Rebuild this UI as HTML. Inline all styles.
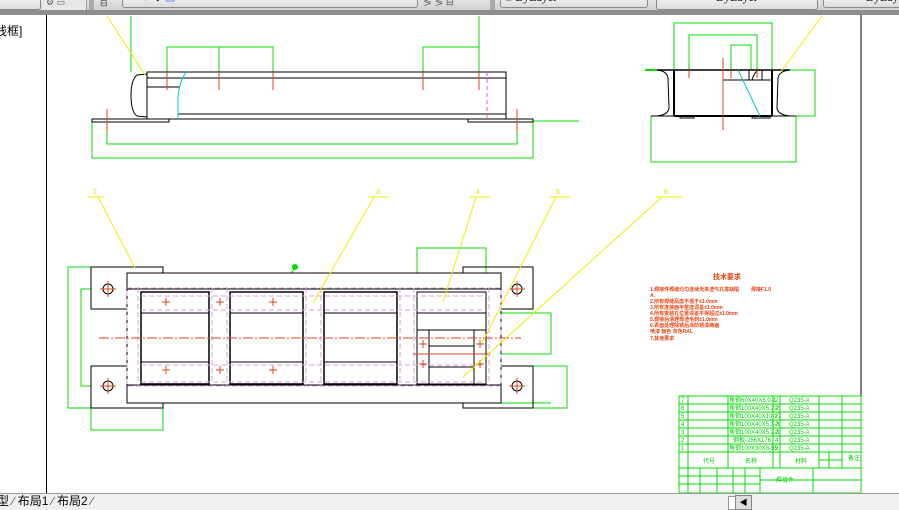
<!DOCTYPE html>
<html><head><meta charset="utf-8"><style>
html,body{margin:0;padding:0;width:899px;height:509px;overflow:hidden;background:#fff;font-family:"Liberation Sans","Noto Sans CJK SC",sans-serif}
#tb{position:absolute;left:0;top:0;width:899px;height:10px;background:linear-gradient(#e4e4e4,#cfcfcf)}
#tb2{position:absolute;left:0;top:10px;width:899px;height:5px;background:#8e8e8e}
.dd{position:absolute;top:-4px;height:12px;background:linear-gradient(#f4f4f4,#dcdcdc);border:1px solid #8a8a8a;border-radius:3px;font:12px "Liberation Serif",serif;color:#000;line-height:1px;overflow:hidden;white-space:nowrap}
#left{position:absolute;left:0;top:15px;width:46px;height:478px;background:#fff;border-right:1px solid #000}
#tabs{position:absolute;left:0;top:493px;width:899px;height:16px;background:#f0f0f0;border-top:1px solid #9a9a9a;font-size:12px;line-height:15px}
</style></head><body>
<div id="tb"></div><div id="tb2"></div>
<div class="dd" style="left:-6px;width:45px"></div>
<div style="position:absolute;left:42px;top:0;width:44px;height:10px;background:#e8e8e8;border-right:1px solid #999"></div>
<div style="position:absolute;left:46px;top:-2px;font-size:9px;line-height:9px;color:#555">⚙ ▭</div>
<div style="position:absolute;left:89px;top:0;width:5px;height:10px;background:#aaa"></div>
<div style="position:absolute;left:100px;top:-1px;font-size:9px;line-height:9px;color:#444">⊟</div>
<div class="dd" style="left:122px;width:296px;font:11px 'Liberation Sans',sans-serif;line-height:1px;padding-left:6px;box-sizing:border-box">♀ ☼ ◆ <span style="color:#26f">▣</span> ■ 0<span style="float:right;margin-right:6px">▾</span></div>
<div style="position:absolute;left:423px;top:-2px;font-size:9px;line-height:9px;color:#444">≶ ≶ ⊟</div>
<div style="position:absolute;left:490px;top:0;width:5px;height:10px;background:#aaa"></div>
<div class="dd" style="left:500px;width:148px;padding-left:4px;box-sizing:border-box">■ ByLayer</div>
<div class="dd" style="left:656px;width:160px;text-align:center">ByLayer</div>
<div class="dd" style="left:823px;width:90px;padding-left:42px;box-sizing:border-box">ByLayer</div>
<div id="left"><div style="position:absolute;left:-5px;top:7px;font-size:12px">线框]</div></div>
<svg style="position:absolute;left:0;top:0" width="899" height="509" viewBox="0 0 899 509">
<line x1="861" y1="15" x2="861" y2="493" stroke="#000"/>
<g fill="none" stroke-width="1">
<!-- top view -->
<g stroke="#0d0">
<polyline points="131,16 131,72"/><polyline points="479,16 479,72"/>
<polyline points="167,72 167,47 273,47 273,72"/><line x1="219" y1="47" x2="219" y2="72"/>
<polyline points="423,72 423,47 479,47"/>
<polyline points="107,120 107,144 517,144 517,120"/>
<polyline points="92,120 92,158 533,158 533,120"/>
<line x1="533" y1="121" x2="579" y2="121"/>
</g>
<g stroke="#000">
<rect x="147" y="72" width="359" height="47"/>
<line x1="147" y1="78" x2="506" y2="78"/><line x1="178" y1="114" x2="506" y2="114"/>
<line x1="147" y1="87" x2="180" y2="87"/>
<path d="M147,74 L137,75 Q131,80 131,95 Q131,112 137,116 L147,117"/>
<rect x="92" y="119" width="77" height="3"/><rect x="468" y="119" width="65" height="3"/>
</g>
<path d="M186,72 Q178,85 178,100 L178,119" stroke="#0cc"/>
<line x1="487" y1="72" x2="487" y2="119" stroke="#c6c" stroke-dasharray="4,3"/>
<g stroke="#d42">
<line x1="167" y1="72" x2="167" y2="90"/><line x1="219" y1="72" x2="219" y2="90"/><line x1="273" y1="72" x2="273" y2="90"/><line x1="423" y1="72" x2="423" y2="90"/><line x1="479" y1="72" x2="479" y2="90"/>
<line x1="107" y1="109" x2="107" y2="132"/><line x1="517" y1="109" x2="517" y2="132"/>
</g>
<line x1="107" y1="16" x2="145" y2="75" stroke="#ee0"/>
<!-- side view -->
<g stroke="#0d0">
<polyline points="674,70 674,23 772,23 772,70"/>
<polyline points="689,70 689,35 757,35 757,70"/>
<polyline points="731,70 731,45 751,45 751,70"/>
<polyline points="651,116 651,162 796,162 796,116"/>
<polyline points="790,70 815,70 815,116 790,116"/>
<line x1="645" y1="70" x2="657" y2="70" stroke-width="2"/>
</g>
<g stroke="#000">
<line x1="657" y1="70" x2="790" y2="70" stroke-width="1.5"/>
<line x1="674" y1="116" x2="772" y2="116" stroke-width="2"/>
<line x1="674" y1="70" x2="674" y2="116" stroke-width="2"/>
<line x1="772" y1="70" x2="772" y2="116" stroke-width="2"/>
<path d="M657,70 Q667,71 668,78 L669,108 Q668,115 657,116 M790,70 Q779,71 778,78 L777,108 Q778,115 790,116"/>
<line x1="723" y1="80" x2="772" y2="80"/>
<line x1="651" y1="116" x2="796" y2="116"/>
<rect x="680" y="116" width="14" height="2"/><rect x="752" y="116" width="18" height="2"/>
<path d="M749,70 L749,80 M762,70 L762,80 M752,80 Q755,70 760,70"/>
</g>
<line x1="723" y1="58" x2="723" y2="130" stroke="#d42"/>
<line x1="689" y1="70" x2="689" y2="78" stroke="#d42"/><line x1="731" y1="70" x2="731" y2="78" stroke="#d42"/><line x1="757" y1="70" x2="757" y2="78" stroke="#d42"/>
<line x1="738" y1="70" x2="760" y2="116" stroke="#0cc"/>
<line x1="822" y1="16" x2="780" y2="73" stroke="#ee0"/>
<!-- plan view -->
<g stroke="#0d0">
<polyline points="91,267 68,267 68,408 91,408"/>
<polyline points="91,289 81,289 81,386 91,386"/>
<polyline points="91,408 91,430 163,430 163,408"/>
<polyline points="417,289 417,248 486,248 486,289"/>
<polyline points="501,313 551,313 551,354 501,354"/>
<polyline points="533,366 567,366 567,408 533,408"/>
<line x1="501" y1="403" x2="551" y2="403"/>
<line x1="295" y1="267" x2="273" y2="303"/>
</g>
<g stroke="#000">
<rect x="91" y="267" width="72" height="42"/><rect x="91" y="366" width="72" height="42"/>
<rect x="463" y="267" width="70" height="42"/><rect x="463" y="366" width="70" height="42"/>
<rect x="127" y="273" width="374" height="130" fill="#fff"/>
<line x1="127" y1="289" x2="501" y2="289"/><line x1="127" y1="385" x2="501" y2="385"/>
<rect x="141" y="292" width="68" height="92" stroke-width="1.5"/>
<rect x="230" y="292" width="73" height="92" stroke-width="1.5"/>
<rect x="324" y="292" width="73" height="92" stroke-width="1.5"/>
<rect x="417" y="292" width="69" height="92"/>
<line x1="141" y1="313" x2="209" y2="313"/><line x1="141" y1="362" x2="209" y2="362"/>
<line x1="230" y1="313" x2="303" y2="313"/><line x1="230" y1="362" x2="303" y2="362"/>
<line x1="324" y1="313" x2="397" y2="313"/><line x1="324" y1="362" x2="397" y2="362"/>
<line x1="417" y1="313" x2="486" y2="313"/>
<rect x="417" y="330" width="69" height="54"/>
<rect x="429" y="330" width="45" height="54"/>
<line x1="429" y1="346" x2="474" y2="346"/><line x1="429" y1="367" x2="474" y2="367"/>
<circle cx="108" cy="289" r="5"/><circle cx="108" cy="386" r="5"/><circle cx="517" cy="289" r="5"/><circle cx="517" cy="386" r="5"/>
</g>
<g stroke="#d8a0d8" stroke-dasharray="5,3">
<rect x="127" y="288" width="374" height="98"/>
<line x1="141" y1="296" x2="486" y2="296"/><line x1="141" y1="382" x2="486" y2="382"/>
<line x1="141" y1="310" x2="486" y2="310"/><line x1="141" y1="365" x2="486" y2="365"/>
<line x1="138" y1="288" x2="138" y2="386"/><line x1="212" y1="288" x2="212" y2="386"/>
<line x1="227" y1="288" x2="227" y2="386"/><line x1="306" y1="288" x2="306" y2="386"/>
<line x1="321" y1="288" x2="321" y2="386"/><line x1="400" y1="288" x2="400" y2="386"/>
<line x1="414" y1="288" x2="414" y2="386"/><line x1="489" y1="288" x2="489" y2="386"/>
</g>
<line x1="99" y1="338" x2="521" y2="338" stroke="#d42" stroke-dasharray="10,2,2,2"/>
<line x1="413" y1="354" x2="490" y2="354" stroke="#d42"/>
<g stroke="#d42">
<path d="M108,281v16M100,289h16M108,378v16M100,386h16M517,281v16M509,289h16M517,378v16M509,386h16"/>
<path d="M166,298v8M162,302h8M220,298v8M216,302h8M273,298v8M269,302h8M166,366v8M162,370h8M220,366v8M216,370h8M273,366v8M269,370h8M423,340v8M419,344h8M480,340v8M476,344h8M423,360v8M419,364h8M480,360v8M476,364h8"/>
</g>
<g stroke="#ee0">
<line x1="88" y1="197" x2="104" y2="197"/><line x1="98" y1="197" x2="135" y2="268"/>
<line x1="368" y1="197" x2="388" y2="197"/><line x1="374" y1="197" x2="313" y2="303"/>
<line x1="470" y1="197" x2="490" y2="197"/><line x1="476" y1="197" x2="443" y2="302"/>
<line x1="550" y1="197" x2="570" y2="197"/><line x1="556" y1="197" x2="482" y2="343"/>
<line x1="656" y1="197" x2="682" y2="197"/><line x1="662" y1="197" x2="463" y2="377"/>
</g>
</g>
<g fill="#dd0" font-size="7" font-family="Liberation Sans">
<text x="93" y="194">2</text><text x="376" y="194">3</text><text x="476" y="194">4</text><text x="556" y="194">5</text><text x="664" y="194">6</text>
</g>
<circle cx="295" cy="267" r="3" fill="#0d0"/>
<!-- tech requirements -->
<g fill="#e84010" font-size="5" font-weight="bold">
<text x="713" y="279" font-size="7">技术要求</text>
<text x="650" y="291">1.焊接件焊缝均匀连续无夹渣气孔等缺陷</text><text x="751" y="291">焊接F1.0</text>
<text x="650" y="297">A.</text>
<text x="650" y="303">2.所有焊缝高度不低于±1.0mm</text>
<text x="650" y="309">3.所有连接面平整度误差±1.0mm</text>
<text x="650" y="315">4.所有安装孔位置误差不得超过±1.0mm</text>
<text x="650" y="321">5.焊接后清理焊渣毛刺±1.0mm</text>
<text x="650" y="327">6.表面处理除锈后涂防锈漆两遍</text>
<text x="650" y="333">喷漆 颜色 灰色RAL</text>
<text x="650" y="340">7.其他要求</text>
</g>
<!-- table -->
<g stroke="#0d0" fill="none">
<rect x="679" y="396" width="182" height="97"/>
<path d="M679,404H861M679,412H861M679,420H861M679,428H861M679,436H861M679,444H861M679,452H861M679,468H861M819,460H842M679,476H760M679,484H760M760,480H861"/>
<path d="M688,396V468M728,396V468M773,396V468M780,396V468M819,396V468M829,452V468M842,396V468M760,468V493M813,468V493M688,468V493M700,468V493M717,468V493M733,468V493M745,468V493"/>
</g>
<g fill="#0c0" font-size="6">
<text x="681" y="402">7</text><text x="681" y="410">6</text><text x="681" y="418">5</text><text x="681" y="426">4</text><text x="681" y="434">3</text><text x="681" y="442">2</text><text x="681" y="450">1</text>
<text x="729" y="402">角钢60X40X5.0-1</text><text x="729" y="410">角钢100X40X5.2-2</text><text x="729" y="418">角钢100X40X10-27</text><text x="729" y="426">角钢100X40X5.3-3</text><text x="729" y="434">角钢100X40X5.2-3</text><text x="733" y="442">钢板-256X176</text><text x="729" y="450">角钢100X30X8-55</text>
<text x="775" y="402">2</text><text x="775" y="410">2</text><text x="775" y="418">2</text><text x="775" y="426">2</text><text x="775" y="434">2</text><text x="775" y="442">4</text><text x="775" y="450">2</text>
<text x="789" y="402">Q235-A</text><text x="789" y="410">Q235-A</text><text x="789" y="418">Q235-A</text><text x="789" y="426">Q235-A</text><text x="789" y="434">Q235-A</text><text x="789" y="442">Q235-A</text><text x="789" y="450">Q235-A</text>
<text x="703" y="463">代号</text><text x="745" y="463">名称</text><text x="795" y="463">材料</text><text x="848" y="460">备注</text>
<text x="776" y="482">焊接件</text>
</g>
</svg>
<div id="tabs"><span style="margin-left:-3px">型</span><span style="color:#555"> ∕ </span>布局1<span style="color:#555"> ∕ </span>布局2<span style="color:#555"> ∕</span>
<div style="position:absolute;left:728px;top:2px;width:6px;height:12px;border:1px solid #999;background:#fff"></div>
<div style="position:absolute;left:735px;top:1px;width:15px;height:13px;border:1px solid #888;background:#ddd;font-size:8px;line-height:13px;text-align:center">◀</div>
</div>
</body></html>
